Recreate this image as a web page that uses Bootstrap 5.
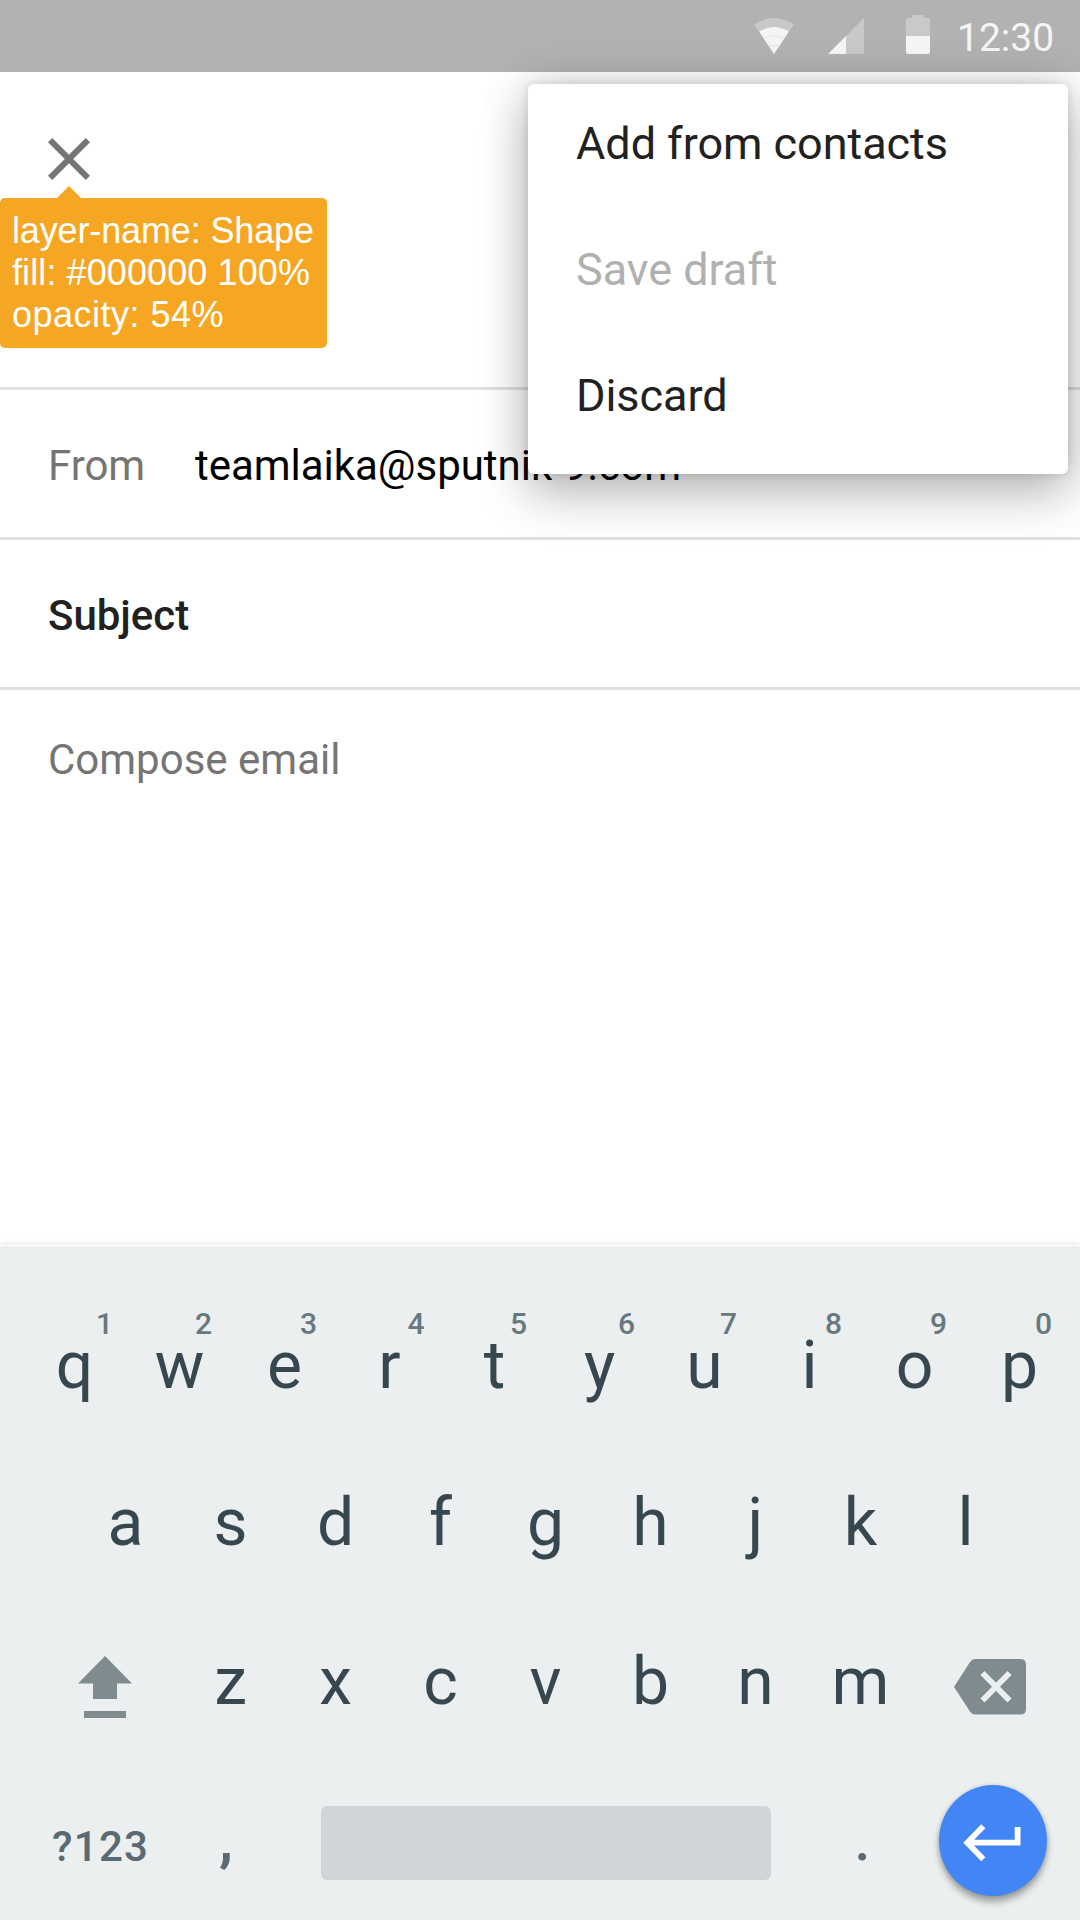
<!DOCTYPE html>
<html lang="en">
<head>
<meta charset="utf-8">
<meta name="viewport" content="width=device-width, initial-scale=1">
<title>Compose</title>
<link href="https://cdn.jsdelivr.net/npm/bootstrap@5.3.0/dist/css/bootstrap.min.css" rel="stylesheet">
<style>
  body { font-family: Roboto, sans-serif; background: #fff; color: #212121; }
  svg { display: block; flex: none; }
  .screen { width: 1080px; height: 1920px; }
  .status-bar { height: 72px; background: #b2b2b2; padding-right: 23px; }
  .clock { font-size: 39px; line-height: 72px; color: #f5f5f5; width: 100px; padding-top: 2px; }
  .app-head { height: 318px; padding: 51px 33px 0; border-bottom: 3px solid #e0e0e0; }
  .field-row { height: 150px; padding: 2px 48px 0; border-bottom: 3px solid #e0e0e0; font-size: 42px; line-height: 147px; letter-spacing: -.03px; }
  .field-label { color: #757575; width: 147px; }
  .semi { font-weight: 500; }
  .message { padding: 1px 48px 0; font-size: 42px; color: #757575; line-height: 138px; }

  .note-tip { left: 0; top: 198px; width: 327px; height: 150px; background: #f5a623; color: #fff; border-radius: 5px; font: 36px/42px "Liberation Sans", sans-serif; padding: 12px 0 0 12px; }
  .note-tip::before { content: ""; position: absolute; left: 57px; top: -12px; border: 12px solid transparent; border-top: 0; border-bottom-color: #f5a623; }
  .note-a { letter-spacing: -.14px; }
  .note-b { letter-spacing: .1px; }
  .note-c { letter-spacing: .5px; }

  .overflow-menu { left: 528px; top: 84px; width: 540px; height: 390px; background: #fff; border-radius: 6px; box-shadow: 0 22px 50px rgba(0,0,0,.22), 0 0 48px rgba(0,0,0,.16), 0 0 10px rgba(0,0,0,.12); font-size: 45px; letter-spacing: -.05px; z-index: 3; }
  .menu-entry { height: 126px; padding: 0 48px; line-height: 120px; }
  .menu-off { color: #b0b0b0; }

  .keyboard { height: 674px; background: #ebeff0; color: #37474f; font-size: 66px; padding-top: 61px; box-shadow: 0 -1px 0 #fff, 0 -2px 5px rgba(0,0,0,.12); }
  .key-row { line-height: 118px; }
  .row-q { height: 157px; padding-left: 22px; }
  .row-a { height: 159px; padding-left: 73px; }
  .row-z { height: 159px; }
  .key { width: 105px; text-align: center; position: relative; flex: none; }
  .hint { position: absolute; left: 68px; top: 2px; font-size: 30px; line-height: 30px; font-weight: 500; color: #67787f; }
  .hint-1 { left: 74px; }
  .hint-4 { left: 70.5px; }
  .hint-6 { left: 71px; }
  .shift-key { width: 178px; padding: 30px 0 0 75px; }
  .delete-key { padding: 33px 0 0 38px; }
  .row-bottom { height: 138px; color: #5b6a72; font-weight: 500; }
  .symbols-key { width: 173px; padding: 6px 0 0 52px; font-size: 42px; letter-spacing: 1.3px; }
  .punct { width: 105px; text-align: center; font-size: 57px; line-height: 118px; }
  .comma { font-weight: 700; padding-left: 1px; }
  .space-bar { width: 450px; height: 74px; margin: 24px 39px 0 43px; border-radius: 6px; background: #d0d5d8; }
  .enter-key { width: 108px; height: 111px; margin: 3px 0 0 24px; border-radius: 50%; background: #4285f4; box-shadow: 0 6px 7px rgba(0,0,0,.32), 0 0 4px rgba(0,0,0,.15); }
</style>
</head>
<body>
<main class="screen position-relative overflow-hidden d-flex flex-column text-nowrap">
  <header class="status-bar d-flex justify-content-end flex-shrink-0">
    <svg width="217" height="72" viewBox="740 0 217 72" fill="#fff">
      <path fill-opacity=".3" d="M774 27Q782 27 789 31.500L794 24.500Q774 11.500 754 24.500L759 31.500Q766 27 774 27z"/>
      <path fill-opacity=".87" d="M774 54 759 31.500Q774 22.500 789 31.500z"/>
      <path d="M764.500 38Q774 34 783.500 38M769 46Q774 44.500 779 46" fill="none" stroke="#b2b2b2" stroke-opacity=".3" stroke-width=".8"/>
      <path fill-opacity=".3" d="M846 36 864 18V54H846z"/>
      <path fill-opacity=".87" d="M828 54 846 36V54z"/>
      <path fill-opacity=".3" d="M906 36V20.500Q906 18 908.500 18H912V15H924V18H927.500Q930 18 930 20.500V36z"/>
      <path fill-opacity=".87" d="M906 36H930V51.500Q930 54 927.500 54H908.500Q906 54 906 51.500z"/>
    </svg>
    <span class="clock">12:30</span>
  </header>

  <section class="app-head flex-shrink-0">
    <svg width="72" height="72" viewBox="0 0 24 24" fill="#757575"><path d="M19 6.410 17.590 5 12 10.590 6.410 5 5 6.410 10.590 12 5 17.590 6.410 19 12 13.410 17.590 19 19 17.590 13.410 12z"/></svg>
  </section>
  <div class="field-row d-flex flex-shrink-0"><span class="field-label">From</span><span class="text-black">teamlaika@sputnik-9.com</span></div>
  <div class="field-row semi flex-shrink-0">Subject</div>
  <div class="message flex-grow-1">Compose email</div>

  <section class="keyboard flex-shrink-0">
    <div class="key-row row-q d-flex">
      <span class="key">q<span class="hint hint-1">1</span></span>
      <span class="key">w<span class="hint">2</span></span>
      <span class="key">e<span class="hint">3</span></span>
      <span class="key">r<span class="hint hint-4">4</span></span>
      <span class="key">t<span class="hint">5</span></span>
      <span class="key">y<span class="hint hint-6">6</span></span>
      <span class="key">u<span class="hint">7</span></span>
      <span class="key">i<span class="hint">8</span></span>
      <span class="key">o<span class="hint">9</span></span>
      <span class="key">p<span class="hint">0</span></span>
    </div>
    <div class="key-row row-a d-flex">
      <span class="key">a</span><span class="key">s</span><span class="key">d</span><span class="key">f</span><span class="key">g</span><span class="key">h</span><span class="key">j</span><span class="key">k</span><span class="key">l</span>
    </div>
    <div class="key-row row-z d-flex">
      <span class="shift-key">
        <svg width="60" height="70" viewBox="75 1653 60 70" fill="#7f8b8f"><path d="M105 1656 132 1683.500H117V1699H93V1683.500H78zM84 1711H126V1718H84z"/></svg>
      </span>
      <span class="key">z</span><span class="key">x</span><span class="key">c</span><span class="key">v</span><span class="key">b</span><span class="key">n</span><span class="key">m</span>
      <span class="delete-key">
        <svg width="78" height="62" viewBox="951 1656 78 62"><path fill="#7f8b8f" d="M954 1687 970 1662Q972 1659 975 1659H1020.500Q1026 1659 1026 1664.500V1709Q1026 1714.500 1020.500 1714.500H975Q972 1714.500 970 1711.500z"/><path stroke="#ebeff0" stroke-width="5.800" d="M982.500 1673 1009.500 1700.500M1009.500 1673 982.500 1700.500"/></svg>
      </span>
    </div>
    <div class="key-row row-bottom d-flex align-items-start">
      <span class="symbols-key">?123</span>
      <span class="punct comma">,</span>
      <span class="space-bar"></span>
      <span class="punct">.</span>
      <span class="enter-key">
        <svg width="108" height="111" viewBox="939 1785 108 111" fill="none" stroke="#fff" stroke-width="5.800"><path d="M983.300 1826.200 967.300 1842.700 983.300 1859.200M966 1842.700H1017.600V1827"/></svg>
      </span>
    </div>
  </section>

  <div class="note-tip position-absolute">
    <div class="note-a">layer-name: Shape</div>
    <div class="note-b">fill: #000000 100%</div>
    <div class="note-c">opacity: 54%</div>
  </div>
  <div class="overflow-menu position-absolute">
    <div class="menu-entry">Add from contacts</div>
    <div class="menu-entry menu-off">Save draft</div>
    <div class="menu-entry">Discard</div>
  </div>
</main>
<script src="https://cdn.jsdelivr.net/npm/bootstrap@5.3.0/dist/js/bootstrap.bundle.min.js"></script>
</body>
</html>
